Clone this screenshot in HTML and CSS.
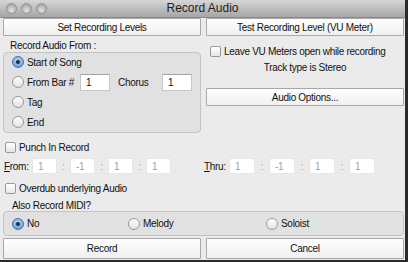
FILE: index.html
```html
<!DOCTYPE html>
<html lang="en">
<head>
    <meta charset="UTF-8">
    <title>Record Audio</title>
    <link rel="stylesheet" href="styles.css">
</head>
<body>
<div class="window">
  <div class="titlebar">
    <span class="light"></span><span class="light"></span><span class="light"></span>
    <div class="title">Record Audio</div>
  </div>

  <div class="content">
    <div class="columns">
      <div class="col">
        <button class="btn">Set Recording Levels</button>
        <div class="label">Record Audio From :</div>
        <div class="group from-group">
          <label class="radio-row"><span class="radio on"></span>Start of Song</label>
          <label class="radio-row">
            <span class="radio"></span><span class="bar-label">From Bar #</span>
            <span class="field">1</span>
            <span class="chorus">Chorus</span>
            <span class="field">1</span>
          </label>
          <label class="radio-row"><span class="radio"></span>Tag</label>
          <label class="radio-row"><span class="radio"></span>End</label>
        </div>
      </div>
      <div class="col">
        <button class="btn">Test Recording Level (VU Meter)</button>
        <label class="check-row vu"><span class="check"></span>Leave VU Meters open while recording</label>
        <div class="track">Track type is Stereo</div>
        <button class="btn options">Audio Options...</button>
      </div>
    </div>

    <label class="check-row punch"><span class="check"></span>Punch In Record</label>

    <div class="range">
      <div class="range-part from">
        <span class="range-label"><u>F</u>rom:</span>
        <span class="field dim">1</span><span class="colon">:</span>
        <span class="field dim">-1</span><span class="colon">:</span>
        <span class="field dim">1</span><span class="colon">:</span>
        <span class="field dim">1</span>
      </div>
      <div class="range-part thru">
        <span class="range-label"><u>T</u>hru:</span>
        <span class="field dim">1</span><span class="colon">:</span>
        <span class="field dim">-1</span><span class="colon">:</span>
        <span class="field dim">1</span><span class="colon">:</span>
        <span class="field dim">1</span>
      </div>
    </div>

    <label class="check-row overdub"><span class="check"></span>Overdub underlying Audio</label>

    <div class="label midi-label">Also Record MIDI?</div>
    <div class="group midi-group">
      <label class="radio-row"><span class="radio on"></span>No</label>
      <label class="radio-row"><span class="radio"></span>Melody</label>
      <label class="radio-row"><span class="radio"></span>Soloist</label>
    </div>

    <div class="columns bottom">
      <button class="btn tall">Record</button>
      <button class="btn tall">Cancel</button>
    </div>
  </div>
</div>
</body>
</html>
```

FILE: styles.css
```css
body {
  margin: 0;
  background: #2a2a2a;
  font-family: "Liberation Sans", Arial, sans-serif;
  font-size: 10px;
  letter-spacing: -0.3px;
  line-height: 13px;
  color: #111;
  white-space: nowrap;
}

* {
  box-sizing: border-box;
}

.window {
  width: 408px;
  height: 262px;
  background: #ebebeb;
  border-right: 3px solid #2a2a2a;
  border-bottom: 2px solid #2a2a2a;
  overflow: hidden;
}

/* title bar with the three grey window lights */
.titlebar {
  height: 18px;
  background: linear-gradient(#d6d6d6, #a6a6a6);
  border-bottom: 1px solid #8a8a8a;
  display: flex;
  align-items: flex-start;
  padding: 3px 0 0 6px;
  gap: 4px;
  position: relative;
}

.light {
  width: 11px;
  height: 11px;
  border-radius: 50%;
  background: radial-gradient(circle at 50% 70%, #e4e4e4, #b4b4b4 60%, #9a9a9a);
  border: 1px solid #8f8f8f;
}

.title {
  position: absolute;
  left: 0;
  right: 0;
  top: 2px;
  text-align: center;
  font-size: 12px;
  letter-spacing: 0;
  color: #1e1e1e;
}

.content {
  padding-left: 3px;
}

.columns {
  display: flex;
  gap: 5px;
}

.col {
  width: 198px;
  display: flex;
  flex-direction: column;
}

.btn {
  font-family: inherit;
  font-size: 10px;
  letter-spacing: -0.3px;
  color: #111;
  height: 18px;
  width: 198px;
  padding: 0;
  background: linear-gradient(#fefefe, #f0f0f0);
  border: 1px solid #a8a8a8;
  border-radius: 1px;
}

.btn.tall {
  height: 21px;
}

.label {
  height: 16px;
  padding: 3px 0 0 7px;
}

.group {
  background: #e1e1e1;
  border: 1px solid #c4c4c4;
  border-radius: 4px;
}

.from-group {
  height: 81px;
  padding-left: 8px;
  display: flex;
  flex-direction: column;
  gap: 2px;
}

.radio-row {
  display: flex;
  align-items: center;
  height: 18px;
}

.radio {
  width: 12px;
  height: 12px;
  border-radius: 50%;
  border: 1px solid #999;
  background: linear-gradient(#ffffff, #e2e2e2);
  margin-right: 3px;
  flex: none;
  display: flex;
  align-items: center;
  justify-content: center;
}

.radio.on {
  background: radial-gradient(circle at 50% 35%, #b4d6f7, #5592d5);
  border-color: #4773a6;
}

.radio.on::after {
  content: "";
  width: 4px;
  height: 4px;
  border-radius: 50%;
  background: #1d2a3a;
}

.bar-label {
  width: 53px;
}

.field {
  background: #fff;
  border: 1px solid #c6c6c6;
  border-top-color: #a2a2a2;
  height: 17px;
  padding: 1px 0 0 5px;
  width: 30px;
  flex: none;
}

.chorus {
  width: 52px;
  padding-left: 8px;
}

.check-row {
  display: flex;
  align-items: center;
  height: 14px;
}

.check {
  width: 11px;
  height: 11px;
  border: 1px solid #9a9a9a;
  border-radius: 2px;
  background: linear-gradient(#ffffff, #e6e6e6);
  margin-right: 3px;
  flex: none;
}

.vu {
  margin: 8px 0 0 4px;
}

.track {
  text-align: center;
  margin-top: 3px;
  height: 13px;
}

.options {
  margin-top: 14px;
}

.punch {
  margin: 7px 0 0 2px;
}

.range {
  display: flex;
  margin-top: 4px;
  height: 16px;
}

.range-part {
  display: flex;
  align-items: center;
  width: 203px;
}

.from .range-label {
  width: 29px;
  padding-left: 1px;
}

.thru .range-label {
  width: 25px;
}

.range-part .field {
  height: 16px;
  width: 25px;
  border-color: #e6e6e6;
  color: #a0a0a0;
  padding-top: 1px;
}

.thru .field {
  width: 26px;
}

.colon {
  width: 13px;
  text-align: center;
  color: #9a9a9a;
}

.thru .colon {
  width: 14px;
}

.overdub {
  margin: 7px 0 0 2px;
}

.midi-label {
  padding: 4px 0 0 9px;
}

.midi-group {
  height: 25px;
  width: 401px;
  display: flex;
  align-items: center;
  padding-left: 8px;
}

.midi-group .radio-row:nth-child(1) {
  width: 116px;
}

.midi-group .radio-row:nth-child(2) {
  width: 138px;
}

.bottom {
  margin-top: 2px;
}
```
